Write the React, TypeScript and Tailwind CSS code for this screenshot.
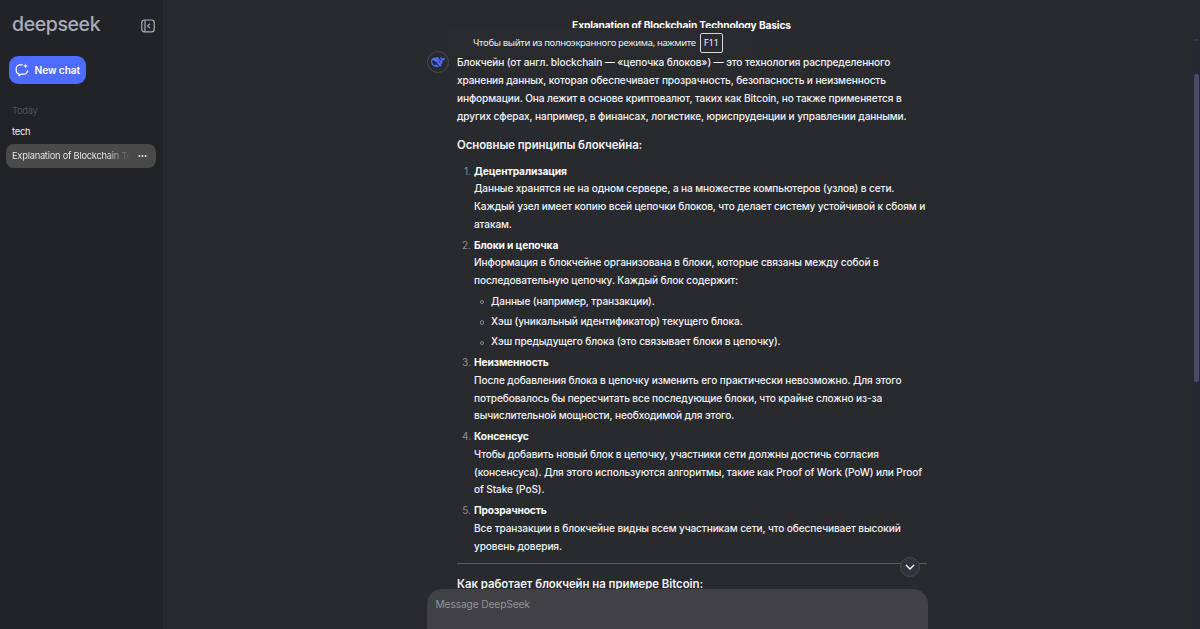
import React from "react";

const WHALE =
  "M23.748 4.482c-.254-.124-.364.113-.512.234-.051.039-.094.09-.137.136-.372.397-.806.657-1.373.626-.829-.046-1.537.214-2.163.848-.133-.782-.575-1.248-1.247-1.548-.352-.156-.708-.311-.955-.65-.172-.241-.219-.51-.305-.774-.055-.16-.11-.323-.293-.35-.2-.031-.278.136-.356.276-.313.572-.434 1.202-.422 1.84.027 1.436.633 2.58 1.838 3.393.137.093.172.187.129.323-.082.28-.18.552-.266.833-.055.179-.137.217-.329.14a5.526 5.526 0 01-1.736-1.18c-.857-.828-1.631-1.742-2.597-2.458a11.365 11.365 0 00-.689-.471c-.985-.957.13-1.743.388-1.836.27-.098.093-.432-.779-.428-.872.004-1.67.295-2.687.684a3.055 3.055 0 01-.465.137 9.597 9.597 0 00-2.883-.102c-1.885.21-3.39 1.102-4.497 2.623C.082 8.606-.231 10.684.152 12.85c.403 2.284 1.569 4.175 3.36 5.653 1.858 1.533 3.997 2.284 6.438 2.14 1.482-.085 3.133-.284 4.994-1.86.47.234.962.327 1.78.397.63.059 1.236-.03 1.705-.128.735-.156.684-.837.419-.961-2.155-1.004-1.682-.595-2.113-.926 1.096-1.296 2.746-2.642 3.392-7.003.05-.347.007-.565 0-.845-.004-.17.035-.237.23-.256a4.173 4.173 0 001.545-.475c1.396-.763 1.96-2.015 2.093-3.517.02-.23-.004-.467-.247-.588zM11.581 18c-2.089-1.642-3.102-2.183-3.52-2.16-.392.024-.321.471-.235.763.09.288.207.486.371.739.114.167.192.416-.113.603-.673.416-1.842-.14-1.897-.167-1.361-.802-2.5-1.86-3.301-3.307-.774-1.393-1.224-2.887-1.298-4.482-.02-.386.093-.522.477-.592a4.696 4.696 0 011.529-.039c2.132.312 3.946 1.265 5.468 2.774.868.86 1.525 1.887 2.202 2.891.72 1.066 1.494 2.082 2.48 2.914.348.292.625.514.891.677-.802.09-2.14.11-3.054-.614zm1-6.44a.306.306 0 01.415-.287.302.302 0 01.2.288.306.306 0 01-.31.307.303.303 0 01-.304-.308zm3.11 1.596c-.2.081-.399.151-.59.16a1.245 1.245 0 01-.798-.254c-.274-.23-.47-.358-.552-.758a1.73 1.73 0 01.016-.588c.07-.327-.008-.537-.239-.727-.187-.156-.426-.199-.688-.199a.559.559 0 01-.254-.078c-.11-.054-.2-.19-.114-.358.028-.054.16-.186.192-.21.356-.202.767-.136 1.146.016.352.144.618.408 1.001.782.391.451.462.576.685.914.176.265.336.537.445.848.067.195-.019.354-.25.452z";

const INTRO = [
  "Блокчейн (от англ. blockchain — «цепочка блоков») — это технология распределенного",
  "хранения данных, которая обеспечивает прозрачность, безопасность и неизменность",
  "информации. Она лежит в основе криптовалют, таких как Bitcoin, но также применяется в",
  "других сферах, например, в финансах, логистике, юриспруденции и управлении данными.",
];

type Principle = { title: string; lines: string[]; items?: string[] };

const PRINCIPLES: Principle[] = [
  {
    title: "Децентрализация",
    lines: [
      "Данные хранятся не на одном сервере, а на множестве компьютеров (узлов) в сети.",
      "Каждый узел имеет копию всей цепочки блоков, что делает систему устойчивой к сбоям и",
      "атакам.",
    ],
  },
  {
    title: "Блоки и цепочка",
    lines: [
      "Информация в блокчейне организована в блоки, которые связаны между собой в",
      "последовательную цепочку. Каждый блок содержит:",
    ],
    items: [
      "Данные (например, транзакции).",
      "Хэш (уникальный идентификатор) текущего блока.",
      "Хэш предыдущего блока (это связывает блоки в цепочку).",
    ],
  },
  {
    title: "Неизменность",
    lines: [
      "После добавления блока в цепочку изменить его практически невозможно. Для этого",
      "потребовалось бы пересчитать все последующие блоки, что крайне сложно из-за",
      "вычислительной мощности, необходимой для этого.",
    ],
  },
  {
    title: "Консенсус",
    lines: [
      "Чтобы добавить новый блок в цепочку, участники сети должны достичь согласия",
      "(консенсуса). Для этого используются алгоритмы, такие как Proof of Work (PoW) или Proof",
      "of Stake (PoS).",
    ],
  },
  {
    title: "Прозрачность",
    lines: [
      "Все транзакции в блокчейне видны всем участникам сети, что обеспечивает высокий",
      "уровень доверия.",
    ],
  },
];

function Lines({ lines }: { lines: string[] }) {
  return (
    <>
      {lines.map((line) => (
        <div key={line} className="whitespace-nowrap">
          {line}
        </div>
      ))}
    </>
  );
}

function Sidebar() {
  return (
    <aside className="flex w-[163px] shrink-0 flex-col bg-[#212327] px-1.5 pt-[14px]">
      <div className="flex h-6 items-center justify-between pr-[2px] pl-[6px]">
        <div className="-mt-[4px] text-[19.5px] leading-6 font-medium tracking-[-0.4px] text-[#a9adbd]">deepseek</div>
        <svg className="-mt-[1px] h-[14px] w-[14px]" viewBox="0 0 14 14" fill="none" stroke="#a9adbd" strokeWidth="1.2">
          <rect x="0.8" y="1" width="12.4" height="11.8" rx="2.6" />
          <path d="M4 1v11.8M8.9 4.7 6.6 6.9l2.3 2.2" />
        </svg>
      </div>
      <button className="mt-[18px] ml-[3px] flex h-7 w-[77px] items-center rounded-[9px] bg-[#4d6bfe] pl-[6px] text-white">
        <svg className="h-[14px] w-[14px]" viewBox="0 0 14 14" fill="none" stroke="white" strokeWidth="1.2" strokeLinecap="round" strokeLinejoin="round">
          <path d="M7.3 1.8H5A3.7 3.7 0 0 0 1.2 5.5v2A3.7 3.7 0 0 0 4 11.1v1.7l2-1.6h2.8a3.7 3.7 0 0 0 3.7-3.7" />
          <path d="M10.6.2c.3 1.9.9 2.5 2.8 2.8-1.9.3-2.5.9-2.8 2.8-.3-1.9-.9-2.5-2.8-2.8 1.9-.3 2.5-.9 2.8-2.8z" fill="white" stroke="none" />
        </svg>
        <span className="mt-[1px] ml-[5.5px] text-[10.2px] font-semibold tracking-[-0.1px] whitespace-nowrap">New chat</span>
      </button>
      <div className="mt-[20px] pl-[6px] text-[9.3px] leading-[14px] tracking-[-0.3px] text-[#505358]">Today</div>
      <div className="mt-[7px] pl-[6px] text-[9.3px] leading-[14px] tracking-[-0.2px] text-[#f0f1f3]">tech</div>
      <div className="mt-[5px] flex h-6 w-[150px] items-center rounded-[8px] bg-[#49494a] pl-[6px] text-[9.3px] tracking-[-0.24px]">
        <div className="w-[118px] bg-linear-to-r from-[#f0f1f3] from-80% to-[#49494a] bg-clip-text whitespace-nowrap text-transparent">
          Explanation of Blockchain Te
        </div>
        <svg className="ml-[8px] h-2 w-[9px]" viewBox="0 0 9 8" fill="#f0f1f3">
          <circle cx="1.4" cy="4" r=".9" />
          <circle cx="4.5" cy="4" r=".9" />
          <circle cx="7.6" cy="4" r=".9" />
        </svg>
      </div>
    </aside>
  );
}

function Answer() {
  return (
    <article className="mt-[1px] w-[470px] text-[10.08px] leading-[17.88px] font-medium tracking-[-0.1px] text-[#f1f3f8]">
      <Lines lines={INTRO} />
      <h3 className="mt-[10px] text-[11.4px] leading-[19px] font-semibold tracking-[-0.06px]">Основные принципы блокчейна:</h3>
      <ol className="mt-[8px] flex flex-col gap-[2.5px]">
        {PRINCIPLES.map((p, i) => (
          <li key={p.title} className="flex">
            <span className="w-[17px] shrink-0 pr-[3px] text-right font-normal tracking-normal text-[#8b8d92]">{i + 1}.</span>
            <div>
              <div className="text-[10.24px] font-bold tracking-[-0.13px] text-[#f8faff]">{p.title}</div>
              <Lines lines={p.lines} />
              {p.items && (
                <ul className="mt-[2.5px] flex flex-col gap-[2.5px]">
                  {p.items.map((item) => (
                    <li key={item} className="flex items-center">
                      <span className="mt-[1px] mr-[7px] ml-[5.5px] h-[4.5px] w-[4.5px] rounded-full border border-[#85878c]" />
                      <span>{item}</span>
                    </li>
                  ))}
                </ul>
              )}
            </div>
          </li>
        ))}
      </ol>
      <hr className="mt-[8px] border-[#5a5c60]" />
      <h3 className="mt-[10.5px] text-[11.4px] leading-[19px] font-semibold tracking-[-0.04px]">Как работает блокчейн на примере Bitcoin:</h3>
    </article>
  );
}

export default function App() {
  return (
    <div className="flex h-[629px] w-[1200px] overflow-hidden bg-[#292a2d] font-['Inter','Liberation_Sans',sans-serif]">
      <Sidebar />
      <main className="relative flex flex-1 flex-col">
        <header className="flex h-[53px] justify-center pt-[17px] text-[10.24px] leading-4 font-bold tracking-[-0.16px] text-[#f8faff]">
          <span>Explanation of Blockchain Technology Basics</span>
        </header>
        <div className="flex pl-[264px]">
          <div className="-mt-[2px] mr-[8px] flex h-[22px] w-[22px] shrink-0 items-center justify-center rounded-full border border-[#434b60]">
            <svg className="h-[14px] w-[14px]" viewBox="0 0 24 24" fill="#4d6bfe">
              <path d={WHALE} />
            </svg>
          </div>
          <Answer />
        </div>
        <div className="absolute top-[28px] left-[286px] flex h-[26px] w-[302px] items-center bg-[#292b31] pt-[4px] pl-[24px] font-['Noto_Sans',sans-serif] text-[9.5px] tracking-[-0.32px] text-[#eceef2]">
          <span className="whitespace-nowrap">Чтобы выйти из полноэкранного режима, нажмите</span>
          <span className="ml-[4px] flex h-[20px] w-[23px] shrink-0 items-center justify-center rounded-[2px] border border-[#d5d6d9]">F11</span>
        </div>
        <button className="absolute top-[557px] left-[737px] flex h-5 w-5 items-center justify-center rounded-full border border-[#484a50] bg-[#32323e]">
          <svg className="h-[10px] w-[10px]" viewBox="0 0 10 10" fill="none" stroke="white" strokeWidth="1.4">
            <path d="m1 3 4 4 4-4" />
          </svg>
        </button>
        <div className="absolute bottom-0 left-[264px] h-[40px] w-[501px] rounded-t-[15px] bg-[#404045] pt-[7px] pl-[8.5px] text-[10.24px] leading-4 tracking-[-0.14px] text-[#92939b]">
          Message DeepSeek
        </div>
        <div className="absolute top-[35px] right-0 flex h-[594px] w-[8px] flex-col items-center bg-[#262834]">
          <svg className="mt-[3px] h-[4px] w-[5px]" viewBox="0 0 5 4" fill="none" stroke="#4b4d55">
            <path d="m.5 3 2-2 2 2" />
          </svg>
          <div className="mt-[32px] h-[308px] w-[5px] rounded-full bg-[#4a4b64]" />
        </div>
      </main>
    </div>
  );
}
